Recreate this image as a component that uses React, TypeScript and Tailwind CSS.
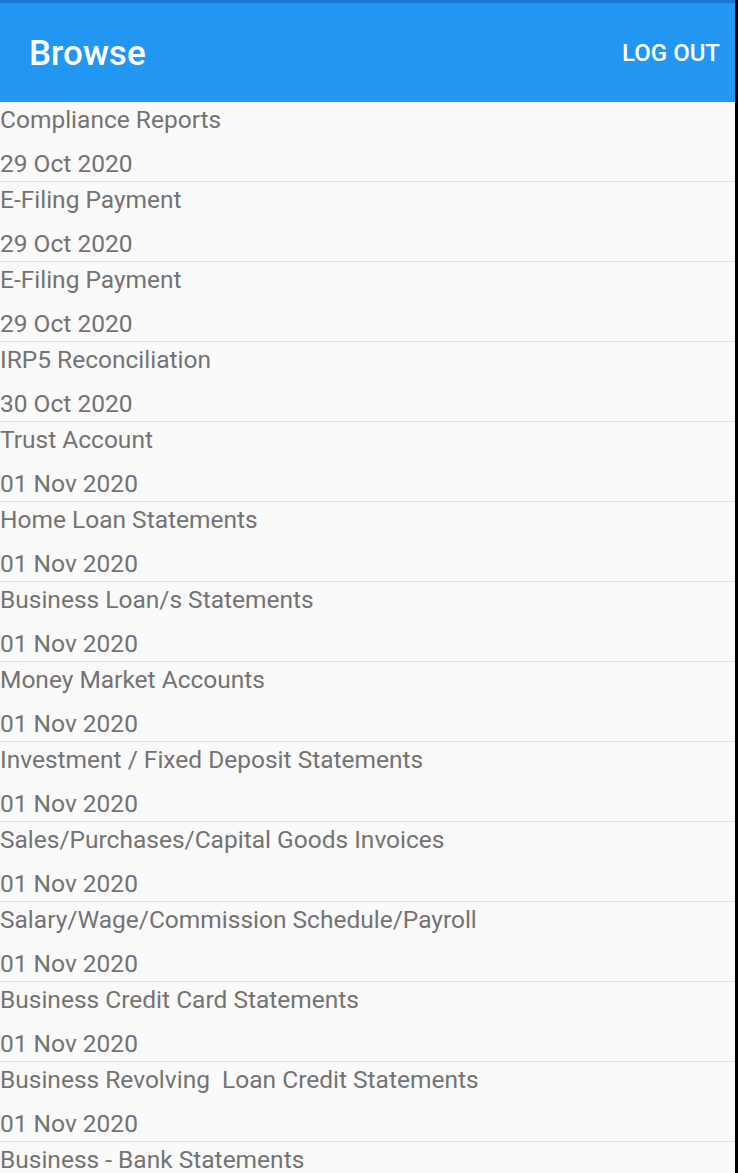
import React from 'react';

interface Item {
  title: string;
  date: string;
}

const items: Item[] = [
  { title: 'Compliance Reports', date: '29 Oct 2020' },
  { title: 'E-Filing Payment', date: '29 Oct 2020' },
  { title: 'E-Filing Payment', date: '29 Oct 2020' },
  { title: 'IRP5 Reconciliation', date: '30 Oct 2020' },
  { title: 'Trust Account', date: '01 Nov 2020' },
  { title: 'Home Loan Statements', date: '01 Nov 2020' },
  { title: 'Business Loan/s Statements', date: '01 Nov 2020' },
  { title: 'Money Market Accounts', date: '01 Nov 2020' },
  { title: 'Investment / Fixed Deposit Statements', date: '01 Nov 2020' },
  { title: 'Sales/Purchases/Capital Goods Invoices', date: '01 Nov 2020' },
  { title: 'Salary/Wage/Commission Schedule/Payroll', date: '01 Nov 2020' },
  { title: 'Business Credit Card Statements', date: '01 Nov 2020' },
  { title: 'Business Revolving  Loan Credit Statements', date: '01 Nov 2020' },
  { title: 'Business - Bank Statements', date: '01 Nov 2020' },
];

const App: React.FC = () => {
  return (
    <div
      className="w-[738px] h-[1173px] overflow-hidden flex flex-col bg-[#fafafa] border-r-[3px] border-black"
      style={{ fontFamily: "Roboto, 'Noto Sans', sans-serif" }}
    >
      {/* Status strip + app bar */}
      <div className="h-[3px] bg-[#1976d2] shrink-0" />
      <header className="h-[99px] shrink-0 bg-[#2196f3] flex items-center justify-between pl-[29px] pr-[15px]">
        <h1 className="text-[35px] font-medium text-white leading-none mt-[2px]">Browse</h1>
        <button className="text-[24px] font-medium text-white leading-none">LOG OUT</button>
      </header>

      {/* List */}
      <ul className="flex flex-col">
        {items.map((item, i) => (
          <li key={i} className="h-[80px] shrink-0 border-b border-[#e0e0e0] flex flex-col text-[#737373] text-[24.5px]">
            <span className="h-[36px] leading-[36px] whitespace-pre">{item.title}</span>
            <span className="h-[36px] leading-[36px] mt-[8px]">{item.date}</span>
          </li>
        ))}
      </ul>
    </div>
  );
};

export default App;
